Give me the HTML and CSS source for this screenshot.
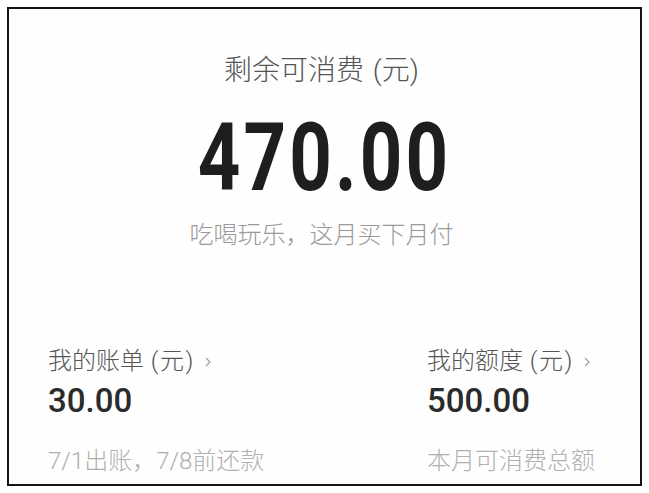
FILE: index.html
```html
<!DOCTYPE html>
<html lang="zh-CN">
<head>
<meta charset="utf-8">
<title>剩余可消费</title>
<link rel="stylesheet" href="styles.css">
</head>
<body>
<div class="card">
  <section class="summary">
    <div class="summary-title">剩余可消费 (元)</div>
    <div class="summary-amount"><span class="amount-digits">470.00</span></div>
    <div class="summary-note">吃喝玩乐，这月买下月付</div>
  </section>
  <section class="stats">
    <div class="stat">
      <div class="stat-label">我的账单 <span class="unit">(元)</span><svg class="chevron" viewBox="0 0 6 10" width="6" height="10"><path d="M1 1l4 4-4 4" fill="none" stroke="#a0a0a0" stroke-width="1.2"/></svg></div>
      <div class="stat-value">30.00</div>
      <div class="stat-note">7/1出账，7/8前还款</div>
    </div>
    <div class="stat stat-right">
      <div class="stat-label">我的额度 <span class="unit">(元)</span><svg class="chevron" viewBox="0 0 6 10" width="6" height="10"><path d="M1 1l4 4-4 4" fill="none" stroke="#a0a0a0" stroke-width="1.2"/></svg></div>
      <div class="stat-value">500.00</div>
      <div class="stat-note">本月可消费总额</div>
    </div>
  </section>
</div>
</body>
</html>
```

FILE: styles.css
```css
html, body {
  margin: 0;
  padding: 0;
  background: #ffffff;
}

body {
  width: 649px;
  height: 493px;
  font-family: Roboto, "Noto Sans CJK SC", sans-serif;
}

.card {
  box-sizing: border-box;
  width: 635px;
  height: 479px;
  margin: 7px;
  border: 2px solid #141414;
  background: #fefefe;
  display: flex;
  flex-direction: column;
}

.summary {
  display: flex;
  flex-direction: column;
  align-items: center;
  padding-top: 44px;
}

.summary-title {
  font-size: 28px;
  line-height: 36px;
  font-weight: 300;
  color: #555555;
  margin-left: -6px;
  word-spacing: 2px;
}

.summary-amount {
  margin-top: 22px;
  height: 94px;
  line-height: 94px;
  display: flex;
  justify-content: center;
}

.amount-digits {
  display: inline-block;
  font-size: 94px;
  line-height: 94px;
  font-weight: 700;
  color: #1e1e1e;
  letter-spacing: 4px;
  transform: scaleX(0.79);
}

.summary-note {
  margin-top: 14px;
  font-size: 24px;
  line-height: 32px;
  font-weight: 300;
  color: #9a9a9a;
  margin-left: -6px;
}

.stats {
  display: flex;
  justify-content: space-between;
  padding: 0 45px 0 39px;
  margin-top: 94px;
}

.stat {
  display: flex;
  flex-direction: column;
}

.stat-label {
  font-size: 24px;
  line-height: 32px;
  font-weight: 300;
  color: #555555;
  display: flex;
  align-items: center;
  white-space: pre;
}

.unit {
  margin-left: 1px;
  letter-spacing: 1.5px;
}

.chevron {
  margin-left: 10px;
  margin-top: 2px;
}

.stat-value {
  margin-top: 4px;
  font-size: 33px;
  line-height: 40px;
  font-weight: 500;
  color: #2b2b2b;
}

.stat-note {
  margin-top: 24px;
  font-size: 24px;
  line-height: 32px;
  font-weight: 300;
  color: #b0b0b0;
}
```
